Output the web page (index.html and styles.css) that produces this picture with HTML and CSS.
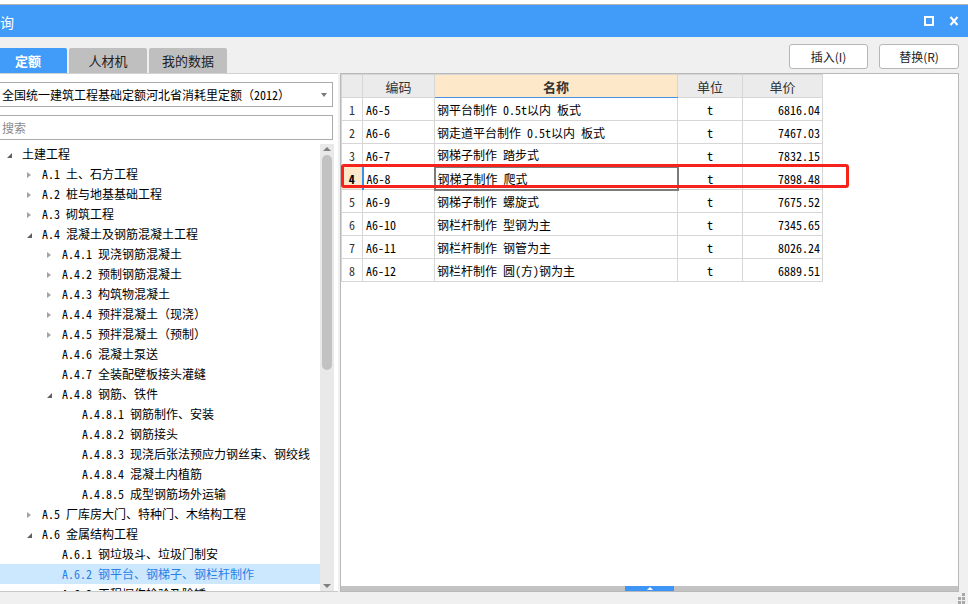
FILE: index.html
```html
<!DOCTYPE html>
<html lang="zh-CN">
<head>
<meta charset="utf-8">
<title>查询</title>
<link rel="stylesheet" href="styles.css">
</head>
<body>
<div class="window">
  <div class="topline"></div>
  <header class="titlebar">
    <span class="title">查询</span>
    <div class="win-btns">
      <svg width="10" height="10" viewBox="0 0 10 10"><rect x="1" y="1" width="8" height="8" fill="none" stroke="#fff" stroke-width="2"/></svg>
      <svg width="10" height="10" viewBox="0 0 10 10"><path d="M1.5 1 L8.5 9 M8.5 1 L1.5 9" stroke="#fff" stroke-width="2" fill="none"/></svg>
    </div>
  </header>
  <div class="toolbar">
    <nav class="tabs">
      <span class="tab active">定额</span>
      <span class="tab">人材机</span>
      <span class="tab">我的数据</span>
    </nav>
    <div class="actions">
      <button class="btn">插入(I)</button>
      <button class="btn btn-wide">替换(R)</button>
    </div>
  </div>
  <div class="main">
    <aside class="left">
      <div class="field select"><span>全国统一建筑工程基础定额河北省消耗里定额（2012）</span><i class="caret"></i></div>
      <div class="field search">搜索</div>
      <div class="tree-wrap">
        <ul class="tree">
          <li class="node lv0"><i class="tw exp"></i>土建工程</li>
          <li class="node lv1"><i class="tw col"></i>A.1 土、石方工程</li>
          <li class="node lv1"><i class="tw col"></i>A.2 桩与地基基础工程</li>
          <li class="node lv1"><i class="tw col"></i>A.3 砌筑工程</li>
          <li class="node lv1"><i class="tw exp"></i>A.4 混凝土及钢筋混凝土工程</li>
          <li class="node lv2"><i class="tw col"></i>A.4.1 现浇钢筋混凝土</li>
          <li class="node lv2"><i class="tw col"></i>A.4.2 预制钢筋混凝土</li>
          <li class="node lv2"><i class="tw col"></i>A.4.3 构筑物混凝土</li>
          <li class="node lv2"><i class="tw col"></i>A.4.4 预拌混凝土（现浇）</li>
          <li class="node lv2"><i class="tw col"></i>A.4.5 预拌混凝土（预制）</li>
          <li class="node lv2"><i class="tw"></i>A.4.6 混凝土泵送</li>
          <li class="node lv2"><i class="tw"></i>A.4.7 全装配壁板接头灌缝</li>
          <li class="node lv2"><i class="tw exp"></i>A.4.8 钢筋、铁件</li>
          <li class="node lv3"><i class="tw"></i>A.4.8.1 钢筋制作、安装</li>
          <li class="node lv3"><i class="tw"></i>A.4.8.2 钢筋接头</li>
          <li class="node lv3"><i class="tw"></i>A.4.8.3 现浇后张法预应力钢丝束、钢绞线</li>
          <li class="node lv3"><i class="tw"></i>A.4.8.4 混凝土内植筋</li>
          <li class="node lv3"><i class="tw"></i>A.4.8.5 成型钢筋场外运输</li>
          <li class="node lv1"><i class="tw col"></i>A.5 厂库房大门、特种门、木结构工程</li>
          <li class="node lv1"><i class="tw exp"></i>A.6 金属结构工程</li>
          <li class="node lv2"><i class="tw"></i>A.6.1 钢垃圾斗、垃圾门制安</li>
          <li class="node lv2 selected"><i class="tw"></i>A.6.2 钢平台、钢梯子、钢栏杆制作</li>
          <li class="node lv2"><i class="tw"></i>A.6.3 工程探伤检验及除锈</li>
        </ul>
        <div class="vscroll">
          <i class="arr-up"></i>
          <div class="thumb"></div>
          <i class="arr-down"></i>
        </div>
      </div>
    </aside>
    <section class="right">
      <div class="grid-area">
        <table class="grid">
          <colgroup>
            <col class="c-num"><col class="c-code"><col class="c-name"><col class="c-unit"><col class="c-price">
          </colgroup>
          <thead>
            <tr><th></th><th>编码</th><th class="sel">名称</th><th>单位</th><th>单价</th></tr>
          </thead>
          <tbody>
            <tr><td class="num">1</td><td class="code">A6-5</td><td class="name">钢平台制作 0.5t以内 板式</td><td class="unit">t</td><td class="price">6816.04</td></tr>
            <tr><td class="num">2</td><td class="code">A6-6</td><td class="name">钢走道平台制作 0.5t以内 板式</td><td class="unit">t</td><td class="price">7467.03</td></tr>
            <tr><td class="num">3</td><td class="code">A6-7</td><td class="name">钢梯子制作 踏步式</td><td class="unit">t</td><td class="price">7832.15</td></tr>
            <tr class="cur"><td class="num">4</td><td class="code">A6-8</td><td class="name">钢梯子制作 爬式</td><td class="unit">t</td><td class="price">7898.48</td></tr>
            <tr><td class="num">5</td><td class="code">A6-9</td><td class="name">钢梯子制作 螺旋式</td><td class="unit">t</td><td class="price">7675.52</td></tr>
            <tr><td class="num">6</td><td class="code">A6-10</td><td class="name">钢栏杆制作 型钢为主</td><td class="unit">t</td><td class="price">7345.65</td></tr>
            <tr><td class="num">7</td><td class="code">A6-11</td><td class="name">钢栏杆制作 钢管为主</td><td class="unit">t</td><td class="price">8026.24</td></tr>
            <tr><td class="num">8</td><td class="code">A6-12</td><td class="name">钢栏杆制作 圆(方)钢为主</td><td class="unit">t</td><td class="price">6889.51</td></tr>
          </tbody>
        </table>
        <div class="mark"></div>
      </div>
      <div class="hbar"><span class="hbar-tab"><i class="hbar-arrow"></i></span></div>
    </section>
  </div>
  <footer class="status">
    <svg width="11" height="11" viewBox="0 0 11 11" class="grip">
      <rect x="7" y="0" width="3" height="3" fill="#a8a8a8"/>
      <rect x="3" y="4" width="3" height="3" fill="#a8a8a8"/>
      <rect x="7" y="4" width="3" height="3" fill="#a8a8a8"/>
      <rect x="3" y="8" width="3" height="3" fill="#a8a8a8"/>
      <rect x="7" y="8" width="3" height="3" fill="#a8a8a8"/>
    </svg>
  </footer>
</div>
</body>
</html>
```

FILE: styles.css
```css
* { box-sizing: border-box; }
html, body { margin: 0; padding: 0; }
body {
  background: #f0f0f0;
  width: 968px;
  height: 604px;
  overflow: hidden;
  font-family: "Noto Sans CJK SC", "Noto Sans", sans-serif;
}
.window {
  width: 968px;
  height: 604px;
  display: flex;
  flex-direction: column;
  overflow: hidden;
}
.topline {
  height: 5px;
  flex: none;
  background: #fff;
  border-bottom: 1px solid #b4b4b4;
}
.titlebar {
  height: 32px;
  flex: none;
  background: #419bf9;
  color: #fff;
  display: flex;
  align-items: center;
  justify-content: space-between;
  padding-right: 9px;
}
.title {
  font-size: 14px;
  line-height: 1;
  margin-left: -14px;
  margin-top: 1px;
}
.win-btns {
  display: flex;
  gap: 15px;
  align-items: center;
}
.win-btns svg { display: block; }

.toolbar {
  height: 36px;
  flex: none;
  display: flex;
  justify-content: space-between;
}
.tabs {
  display: flex;
  gap: 2px;
  margin-left: -11px;
  align-self: flex-end;
}
.tab {
  width: 78px;
  height: 25px;
  line-height: 25px;
  text-align: center;
  font-size: 13px;
  color: #222;
  background: #bfbfbf;
  border-radius: 2px 2px 0 0;
}
.tab.active {
  background: #419bf9;
  color: #fff;
  font-weight: bold;
}
.actions {
  display: flex;
  gap: 11px;
  padding-top: 7px;
  padding-right: 9px;
}
.btn {
  width: 79px;
  height: 25px;
  padding: 0;
  background: #fff;
  border: 1px solid #b6b6b6;
  border-radius: 3px;
  font-family: "Noto Sans CJK SC", sans-serif;
  font-size: 12px;
  color: #222;
}
.btn-wide { width: 80px; }

.main {
  height: 519px;
  flex: none;
  display: flex;
  gap: 2px;
}
.left {
  width: 338px;
  background: #fff;
  border-top: 1px solid #d2d2d2;
  border-bottom: 1px solid #c8c8c8;
  display: flex;
  flex-direction: column;
  padding-top: 8px;
}
.field {
  margin-left: -2px;
  width: 335px;
  height: 25px;
  flex: none;
  border: 1px solid #ababab;
  display: flex;
  align-items: center;
  padding: 0 5px 0 3px;
  font-family: "Noto Sans Mono CJK SC", "Noto Sans CJK SC", monospace;
  font-size: 12px;
  color: #000;
  white-space: nowrap;
}
.search {
  margin-top: 8px;
  color: #8a8a8a;
}
.caret {
  margin-left: auto;
  width: 0;
  height: 0;
  border-top: 4px solid #7a7a7a;
  border-left: 3.5px solid transparent;
  border-right: 3.5px solid transparent;
}
.tree-wrap {
  flex: 1;
  min-height: 0;
  margin-top: 4px;
  display: flex;
  padding-right: 4px;
}
.tree {
  flex: 1;
  min-width: 0;
  overflow: hidden;
  list-style: none;
  margin: 0;
  padding: 0;
}
.node {
  height: 20px;
  line-height: 20px;
  display: flex;
  align-items: center;
  white-space: nowrap;
  font-family: "Noto Sans Mono CJK SC", "Noto Sans CJK SC", monospace;
  font-size: 12px;
  color: #000;
}
.lv0 { padding-left: 4px; }
.lv1 { padding-left: 24px; }
.lv2 { padding-left: 44px; }
.lv3 { padding-left: 64px; }
.tw {
  width: 18px;
  height: 20px;
  flex: none;
  display: flex;
  align-items: center;
  padding-left: 3px;
}
.tw.exp::before {
  content: "";
  width: 0;
  height: 0;
  margin-top: 3px;
  border-bottom: 5px solid #606060;
  border-left: 5px solid transparent;
}
.tw.col::before {
  content: "";
  width: 0;
  height: 0;
  margin-top: 2px;
  border-left: 4px solid #a3a3a3;
  border-top: 3px solid transparent;
  border-bottom: 3px solid transparent;
}
.node.selected {
  background: #cce8ff;
  color: #2a7fe6;
}
.vscroll {
  width: 14px;
  flex: none;
  background: #e9e9e9;
  display: flex;
  flex-direction: column;
  align-items: center;
}
.arr-up {
  margin-top: 3px;
  width: 0;
  height: 0;
  border-bottom: 4px solid #808080;
  border-left: 4px solid transparent;
  border-right: 4px solid transparent;
}
.thumb {
  margin-top: 4px;
  width: 10px;
  height: 215px;
  border-radius: 5px;
  background: #c2c2c2;
}
.arr-down {
  margin-top: auto;
  margin-bottom: 3px;
  width: 0;
  height: 0;
  border-top: 4px solid #808080;
  border-left: 4px solid transparent;
  border-right: 4px solid transparent;
}

.right {
  width: 619px;
  background: #fff;
  border: 1px solid #b9b9b9;
  display: flex;
  flex-direction: column;
}
.grid-area {
  flex: 1;
  position: relative;
}
.grid {
  border-collapse: collapse;
  table-layout: fixed;
  width: 481px;
}
.c-num { width: 21px; }
.c-code { width: 72px; }
.c-name { width: 243px; }
.c-unit { width: 65px; }
.c-price { width: 80px; }
.grid th, .grid td {
  border: 1px solid #d6d6d6;
  height: 23px;
  padding: 0;
  white-space: nowrap;
  overflow: hidden;
}
.grid th {
  background: #ebebeb;
  font-family: "Noto Sans CJK SC", sans-serif;
  font-size: 13px;
  font-weight: normal;
  color: #333;
  text-align: center;
}
.grid th.sel {
  background: #fde8ca;
  font-weight: bold;
  border-bottom: 1px solid #4a90e2;
}
.grid td {
  font-family: "Noto Sans Mono CJK SC", "Noto Sans CJK SC", monospace;
  font-size: 12px;
  color: #000;
}
.grid td.num { text-align: center; color: #333; }
.grid td.code { padding-left: 3px; }
.grid td.name { padding-left: 2px; }
.grid td.unit { text-align: center; }
.grid td.price { text-align: right; padding-right: 2px; }
.grid tr.cur td.num {
  background: #fde8ca;
  font-weight: bold;
  color: #000;
}
.grid tr.cur td.code { border-left: 2px solid #3c8ee8; }
.grid tr.cur td.name { border: 2px solid #7b7b7b; }
.mark {
  position: absolute;
  left: 0;
  top: 90px;
  width: 508px;
  height: 24px;
  border: 3px solid #f5231b;
  border-radius: 3px;
  pointer-events: none;
}
.hbar {
  height: 5px;
  flex: none;
  background: #c3c3c3;
  display: flex;
  justify-content: center;
}
.hbar-tab {
  width: 49px;
  background: #3f95f6;
  display: flex;
  justify-content: center;
  align-items: center;
}
.hbar-arrow {
  width: 0;
  height: 0;
  border-bottom: 3px solid #fff;
  border-left: 3px solid transparent;
  border-right: 3px solid transparent;
}
.status {
  flex: 1;
  display: flex;
  justify-content: flex-end;
  align-items: flex-start;
  padding: 1px 2px 0 0;
}
.grip { display: block; }
```
